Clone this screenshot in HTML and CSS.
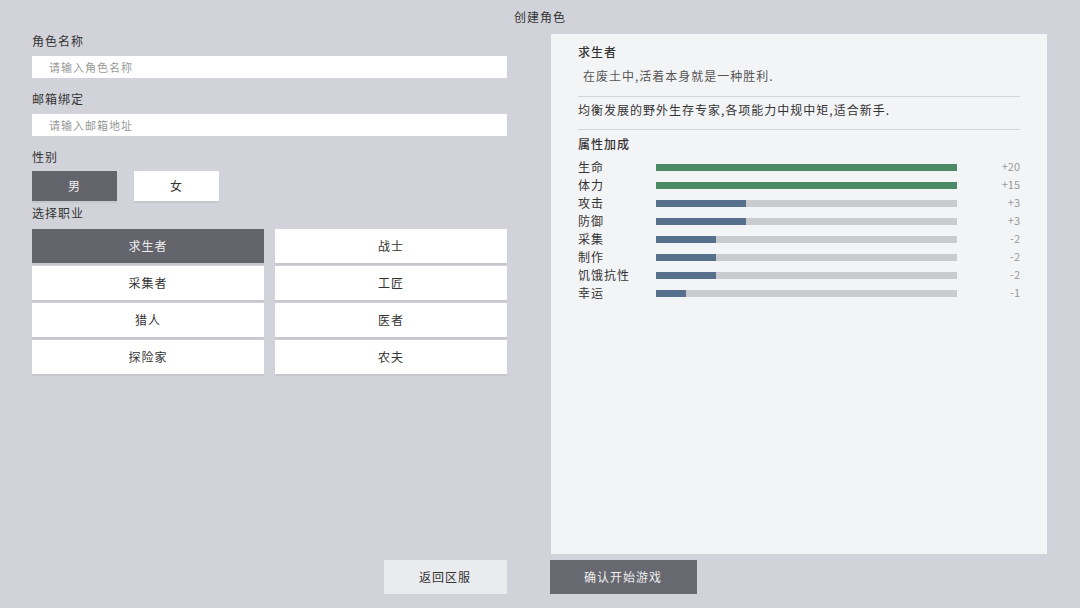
FILE: index.html
```html
<!DOCTYPE html>
<html lang="zh">
<head>
    <meta charset="UTF-8">
    <meta name="viewport" content="width=device-width, initial-scale=1.0">
    <title>创建角色</title>
    <link rel="stylesheet" href="styles.css">
</head>
<body>
    <div class="page">
        <div class="page-title">创建角色</div>
        <div class="main">
            <div class="form">
                <div class="label">角色名称</div>
                <div class="input">请输入角色名称</div>
                <div class="label gap">邮箱绑定</div>
                <div class="input">请输入邮箱地址</div>
                <div class="label gap">性别</div>
                <div class="gender">
                    <div class="btn selected">男</div>
                    <div class="btn">女</div>
                </div>
                <div class="label job-label">选择职业</div>
                <div class="jobs">
                    <div class="btn selected">求生者</div>
                    <div class="btn">战士</div>
                    <div class="btn">采集者</div>
                    <div class="btn">工匠</div>
                    <div class="btn">猎人</div>
                    <div class="btn">医者</div>
                    <div class="btn">探险家</div>
                    <div class="btn">农夫</div>
                </div>
            </div>
            <div class="panel">
                <div class="job-name">求生者</div>
                <div class="job-quote">在废土中,活着本身就是一种胜利.</div>
                <div class="divider"></div>
                <div class="job-desc">均衡发展的野外生存专家,各项能力中规中矩,适合新手.</div>
                <div class="divider second"></div>
                <div class="section">属性加成</div>
                <div class="stats">
                    <div class="stat"><span>生命</span><div class="track"><div class="fill good" style="width:100%"></div></div><span class="val">+20</span></div>
                    <div class="stat"><span>体力</span><div class="track"><div class="fill good" style="width:100%"></div></div><span class="val">+15</span></div>
                    <div class="stat"><span>攻击</span><div class="track"><div class="fill" style="width:30%"></div></div><span class="val">+3</span></div>
                    <div class="stat"><span>防御</span><div class="track"><div class="fill" style="width:30%"></div></div><span class="val">+3</span></div>
                    <div class="stat"><span>采集</span><div class="track"><div class="fill" style="width:20%"></div></div><span class="val">-2</span></div>
                    <div class="stat"><span>制作</span><div class="track"><div class="fill" style="width:20%"></div></div><span class="val">-2</span></div>
                    <div class="stat"><span>饥饿抗性</span><div class="track"><div class="fill" style="width:20%"></div></div><span class="val">-2</span></div>
                    <div class="stat"><span>幸运</span><div class="track"><div class="fill" style="width:10%"></div></div><span class="val">-1</span></div>
                </div>
            </div>
        </div>
        <div class="actions">
            <div class="action back">返回区服</div>
            <div class="action confirm">确认开始游戏</div>
        </div>
    </div>
</body>
</html>
```

FILE: styles.css
```css
body, html {
    margin: 0;
    padding: 0;
    width: 100%;
    height: 100%;
    overflow: hidden;
    background: #d2d3da;
    font-family: "Noto Sans CJK SC", "Noto Sans", sans-serif;
    color: #333;
    font-size: 12px;
}
.page {
    padding: 0 32px;
}
.page-title {
    height: 34px;
    line-height: 34px;
    text-align: center;
    letter-spacing: 1px;
}
.main {
    display: flex;
    gap: 44px;
}
.form {
    width: 475px;
    display: flex;
    flex-direction: column;
}
.label {
    line-height: 16px;
    margin-top: -1px;
    letter-spacing: 1px;
}
.label.gap {
    margin-top: 13px;
}
.input {
    margin-top: 7px;
    height: 22px;
    line-height: 22px;
    background: #fff;
    padding-left: 17px;
    color: #999;
    font-size: 11px;
    letter-spacing: 1px;
}
.btn {
    background: #fff;
    text-align: center;
    letter-spacing: 1px;
    box-shadow: 0 2px 1px rgba(0, 0, 0, 0.05);
}
.btn.selected {
    background: #63646c;
    color: #eee;
}
.gender {
    display: flex;
    gap: 17px;
    margin-top: 6px;
}
.gender .btn {
    width: 85px;
    height: 30px;
    line-height: 30px;
}
.job-label {
    margin-top: 4px;
}
.jobs {
    margin-top: 8px;
    display: grid;
    grid-template-columns: 232px 232px;
    grid-auto-rows: 34px;
    column-gap: 11px;
    row-gap: 3px;
}
.jobs .btn {
    line-height: 34px;
}
.panel {
    width: 496px;
    height: 520px;
    box-sizing: border-box;
    background: #f3f4f6;
    padding: 10px 27px 0;
}
.job-name {
    line-height: 16px;
    font-weight: 500;
    letter-spacing: 1px;
}
.job-quote {
    margin-top: 8px;
    padding-left: 5px;
    line-height: 16px;
    color: #555;
    letter-spacing: 1px;
}
.divider {
    height: 1px;
    background: #d4d5d9;
    margin-top: 12px;
}
.divider.second {
    margin-top: 11px;
}
.job-desc {
    margin-top: 5px;
    line-height: 16px;
    letter-spacing: 1px;
}
.divider + .section {
    margin-top: 6px;
}
.section {
    line-height: 16px;
    font-weight: 500;
    letter-spacing: 1px;
}
.stats {
    margin-top: 5px;
}
.stat {
    display: grid;
    grid-template-columns: 78px 301px 1fr;
    align-items: center;
    height: 18px;
    letter-spacing: 1px;
}
.track {
    height: 7px;
    background: #c9cbce;
    margin-top: 3px;
}
.fill {
    height: 100%;
    background: #57708b;
}
.fill.good {
    background: #4c8a65;
}
.val {
    text-align: right;
    color: #999;
    font-size: 11px;
    letter-spacing: 0;
}
.actions {
    display: flex;
    justify-content: center;
    gap: 43px;
    margin-top: 6px;
}
.action {
    height: 34px;
    line-height: 34px;
    text-align: center;
    letter-spacing: 1px;
}
.back {
    width: 123px;
    background: #eaebee;
}
.confirm {
    width: 147px;
    background: #676870;
    color: #eee;
}
```
